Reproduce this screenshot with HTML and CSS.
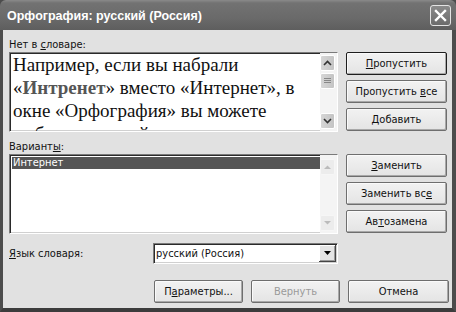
FILE: index.html
```html
<!DOCTYPE html>
<html lang="ru">
<head>
  <meta charset="UTF-8">
  <title>Орфография</title>
  <link rel="stylesheet" href="styles.css">
</head>
<body>
  <div class="window">
    <div class="titlebar">
      <span class="title">Орфография: русский (Россия)</span>
      <div class="close">
        <svg width="19" height="19" viewBox="0 0 19 19"><path d="M5 5 L14 14 M14 5 L5 14" stroke="#fff" stroke-width="2.4" stroke-linecap="square"/></svg>
      </div>
    </div>
    <div class="content">
      <div class="row">
        <div class="main">
          <div class="label">Нет в <u>с</u>ловаре:</div>
          <div class="box notfound">
            <div class="text">Например, если вы набрали<br>«<b>Интренет</b>» вместо «Интернет», в<br>окне «Орфография» вы можете<br>выбрать нужный вариант в поле</div>
            <div class="scroll">
              <div class="sbtn"><svg width="9" height="6" viewBox="0 0 9 6"><path d="M1 5 L4.5 1.5 L8 5" fill="none" stroke="#333" stroke-width="1.6"/></svg></div>
              <div class="track"><div class="sbtn thumb"><svg width="7" height="6" viewBox="0 0 7 6"><path d="M0 .5H7M0 2.5H7M0 4.5H7" stroke="#888" stroke-width="1"/></svg></div></div>
              <div class="sbtn"><svg width="9" height="6" viewBox="0 0 9 6"><path d="M1 1 L4.5 4.5 L8 1" fill="none" stroke="#333" stroke-width="1.6"/></svg></div>
            </div>
          </div>
        </div>
        <div class="buttons">
          <div class="btn default"><span><u>П</u>ропустить</span></div>
          <div class="btn"><span>Пропустить <u>в</u>се</span></div>
          <div class="btn"><span><u>Д</u>обавить</span></div>
        </div>
      </div>
      <div class="row">
        <div class="main">
          <div class="label">Вариант<u>ы</u>:</div>
          <div class="box variants">
            <div class="list">
              <div class="item selected">Интернет</div>
            </div>
            <div class="scroll off">
              <div class="sbtn"><svg width="9" height="6" viewBox="0 0 9 6"><path d="M1 5 L4.5 1.5 L8 5" fill="#bbb"/></svg></div>
              <div class="track"></div>
              <div class="sbtn"><svg width="9" height="6" viewBox="0 0 9 6"><path d="M1 1 L4.5 4.5 L8 1" fill="#bbb"/></svg></div>
            </div>
          </div>
        </div>
        <div class="buttons">
          <div class="btn"><span><u>З</u>аменить</span></div>
          <div class="btn"><span>Заменить вс<u>е</u></span></div>
          <div class="btn"><span>Ав<u>т</u>озамена</span></div>
        </div>
      </div>
      <div class="langrow">
        <div class="langlabel"><u>Я</u>зык словаря:</div>
        <div class="combo">
          <span class="value">русский (Россия)</span>
          <div class="drop"><svg width="7" height="4" viewBox="0 0 7 4"><path d="M0 0H7L3.5 4Z" fill="#000"/></svg></div>
        </div>
      </div>
      <div class="footer">
        <div class="btn small"><span>П<u>а</u>раметры...</span></div>
        <div class="btn small disabled"><span>Вернуть</span></div>
        <div class="btn"><span>Отмена</span></div>
      </div>
    </div>
  </div>
</body>
</html>
```

FILE: styles.css
```css
body {
  margin: 0;
  background: #4c4c4c;
}
.window {
  width: 456px;
  height: 312px;
  display: flex;
  flex-direction: column;
  font-family: "DejaVu Sans Condensed", "Liberation Sans", sans-serif;
  font-size: 11px;
  color: #111;
}
.titlebar {
  height: 30px;
  flex: none;
  display: flex;
  align-items: center;
  justify-content: space-between;
  padding: 0 5px 0 7px;
  background: linear-gradient(#8a8a8a 0, #727272 3px, #6a6a6a 60%, #5e5e5e 100%);
  border-radius: 6px 6px 0 0;
}
.title {
  color: #fff;
  font-family: "Liberation Sans", sans-serif;
  font-weight: bold;
  font-size: 12.5px;
  padding-top: 1px;
}
.close {
  width: 19px;
  height: 19px;
  border: 1px solid #e4e4e4;
  border-radius: 3px;
  background: linear-gradient(#8a8a8a, #6c6c6c);
  display: flex;
}
.content {
  flex: 1;
  background: #e1e1e1;
  border-left: 3px solid #4c4c4c;
  border-right: 4px solid #4c4c4c;
  border-bottom: 4px solid #3c3c3c;
  padding: 8px 0 0 6px;
  display: flex;
  flex-direction: column;
}
.row {
  display: flex;
  gap: 8px;
  margin-bottom: 8px;
}
.main {
  width: 329px;
}
.label {
  height: 14px;
  line-height: 13px;
}
.box {
  display: flex;
  height: 80px;
  box-sizing: border-box;
  background: #fff;
  border-top: 1px solid #7a7a7a;
  border-left: 1px solid #7a7a7a;
  border-right: 1px solid #fff;
  border-bottom: 1px solid #fff;
  box-shadow: inset 1px 1px 0 #2a2a2a, inset -1px -1px 0 #d0d0d0;
  overflow: hidden;
}
.text {
  flex: 1;
  padding: 0 0 0 3px;
  font-family: "Liberation Serif", "Times New Roman", "DejaVu Serif", serif;
  font-size: 19px;
  line-height: 23px;
  color: #111;
  white-space: nowrap;
}
.text b {
  color: #555;
}
.scroll {
  width: 15px;
  flex: none;
  display: flex;
  flex-direction: column;
  padding: 2px 2px 2px 0;
  background: #f4f4f4;
}
.track {
  flex: 1;
  padding-top: 2px;
}
.sbtn {
  height: 14px;
  border: 1px solid #fff;
  border-radius: 2px;
  background: linear-gradient(90deg, #d6d6d6, #c4c4c4);
  display: flex;
  align-items: center;
  justify-content: center;
}
.scroll.off {
  padding-top: 4px;
}
.scroll.off .sbtn {
  background: #ececec;
  border-color: #f6f6f6;
}
.list {
  flex: 1;
  padding: 2px 0 0 2px;
}
.item {
  height: 12px;
  line-height: 12px;
  padding-left: 1px;
}
.item.selected {
  background: #555;
  color: #fff;
}
.buttons {
  width: 101px;
  padding-top: 14px;
  display: flex;
  flex-direction: column;
  gap: 5px;
}
.btn {
  height: 23px;
  width: 101px;
  box-sizing: border-box;
  display: flex;
  align-items: center;
  justify-content: center;
  border: 1px solid #6e6e6e;
  border-radius: 2px;
  background: linear-gradient(#f2f2f2, #e4e4e4);
  box-shadow: inset -1px -1px 0 #a8a8a8, inset 1px 1px 0 #fafafa;
  color: #111;
}
.btn.default {
  border: 1px solid #1e1e1e;
}
.btn.small {
  width: 89px;
}
.btn.disabled {
  color: #9a9a9a;
}
.langrow {
  display: flex;
  align-items: center;
  margin-top: 1px;
}
.langlabel {
  width: 144px;
}
.combo {
  width: 185px;
  height: 21px;
  box-sizing: border-box;
  display: flex;
  align-items: center;
  background: #fff;
  border-top: 1px solid #7a7a7a;
  border-left: 1px solid #7a7a7a;
  border-right: 1px solid #fff;
  border-bottom: 1px solid #fff;
  box-shadow: inset 1px 1px 0 #2a2a2a, inset -1px -1px 0 #d0d0d0;
  padding: 1px 1px 1px 2px;
}
.value {
  flex: 1;
}
.drop {
  width: 17px;
  height: 17px;
  box-sizing: border-box;
  background: #e4e4e4;
  border-right: 1px solid #444;
  border-bottom: 1px solid #444;
  box-shadow: inset 1px 1px 0 #fff, inset -1px -1px 0 #999;
  display: flex;
  align-items: center;
  justify-content: center;
}
.footer {
  display: flex;
  gap: 8px;
  margin-top: 16px;
  padding-left: 145px;
}
```
